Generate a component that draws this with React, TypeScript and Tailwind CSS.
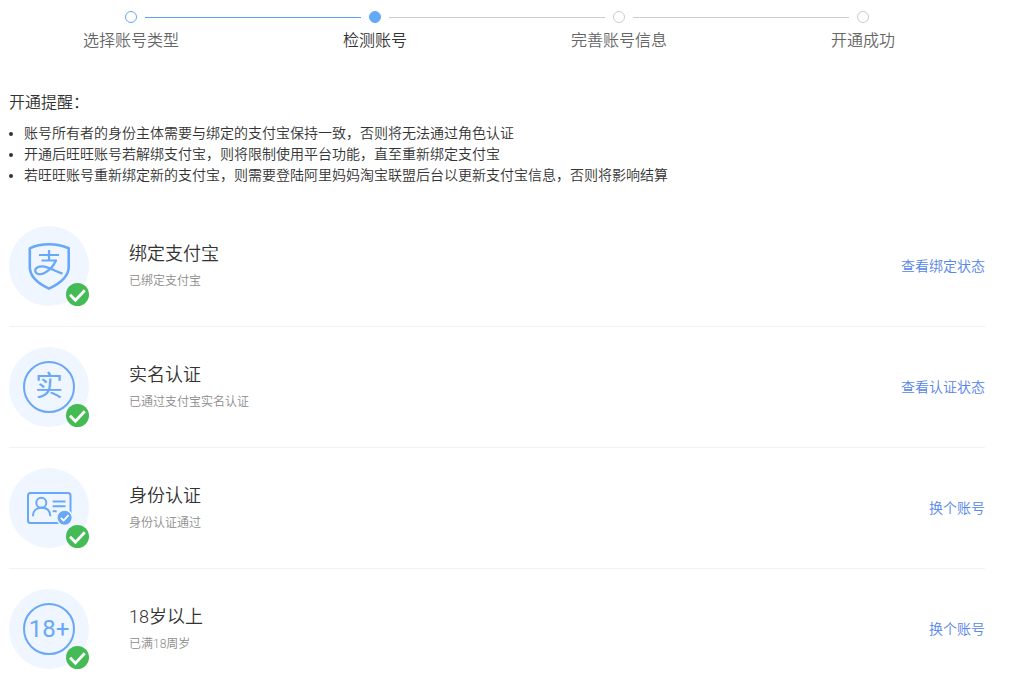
import type { ReactNode } from 'react';

type StepStatus = 'done' | 'current' | 'todo';

const STEPS: { title: string; status: StepStatus }[] = [
  { title: '选择账号类型', status: 'done' },
  { title: '检测账号', status: 'current' },
  { title: '完善账号信息', status: 'todo' },
  { title: '开通成功', status: 'todo' },
];

const TIPS = [
  '账号所有者的身份主体需要与绑定的支付宝保持一致，否则将无法通过角色认证',
  '开通后旺旺账号若解绑支付宝，则将限制使用平台功能，直至重新绑定支付宝',
  '若旺旺账号重新绑定新的支付宝，则需要登陆阿里妈妈淘宝联盟后台以更新支付宝信息，否则将影响结算',
];

const DOT_STYLES: Record<StepStatus, string> = {
  done: 'border-[#62a8fb] bg-white',
  current: 'border-[#62a8fb] bg-[#62a8fb]',
  todo: 'border-[#cccccc] bg-white',
};

function lineColor(index: number) {
  // 首尾两端不显示连接线
  if (index < 0 || index >= STEPS.length - 1) return 'bg-transparent';
  return STEPS[index].status === 'done' ? 'bg-[#5c9df5]' : 'bg-[#cccccc]';
}

function Steps() {
  return (
    <ol className="grid grid-cols-4">
      {STEPS.map((step, i) => (
        <li key={step.title} className="text-center">
          <div className="flex items-center">
            <span className={`h-px flex-1 ${lineColor(i - 1)}`} />
            <span className={`mx-2 size-3 rounded-full border ${DOT_STYLES[step.status]}`} />
            <span className={`h-px flex-1 ${lineColor(i)}`} />
          </div>
          <p
            className={`mt-1.5 text-base leading-6 ${
              step.status === 'current' ? 'text-[#333333]' : 'text-[#666666]'
            }`}
          >
            {step.title}
          </p>
        </li>
      ))}
    </ol>
  );
}

/** 支付宝盾牌 */
function ShieldIcon() {
  return (
    <svg
      className="size-20"
      viewBox="0 0 80 80"
      fill="none"
      stroke="currentColor"
      strokeLinejoin="round"
    >
      <path
        strokeWidth="2.6"
        d="M40 18.3C34 18.3 26 19.8 20.8 22.3V41C20.8 50.5 29 57.5 40 62.6C51 57.5 59.7 50.5 59.7 41V22.3C54 19.8 46 18.3 40 18.3Z"
      />
      <g strokeWidth="2.2">
        <path d="M40 24V34.3M30 29H50M32.5 34.5H48" />
        <path d="M47 34C45 39.5 40.5 44.3 35.5 47C31.5 49.2 26.4 48.4 26.2 44.8C26 41.2 31 39.6 35.5 40.6C41 41.8 46.5 45.2 53.5 47.6" />
      </g>
    </svg>
  );
}

/** 圆环文字图标 */
function RingIcon({ children }: { children: ReactNode }) {
  return (
    <div className="grid size-[52px] place-items-center rounded-full border-2 border-[#69a7f8] font-normal">
      {children}
    </div>
  );
}

/** 身份证 */
function IdCardIcon() {
  return (
    <svg className="size-20" viewBox="0 0 80 80" fill="none" stroke="currentColor" strokeWidth="2">
      <rect x="19" y="25" width="42.5" height="30" rx="2.5" />
      <circle cx="32.3" cy="34.7" r="5" />
      <path d="M23.8 48.2C24 42.8 27.5 39.8 32.5 39.8S41 42.8 41.4 48.2" />
      <path d="M43.7 33.5H56.5M43.7 38.2H56.5M43.7 43.2H47.7" />
      <circle cx="55.6" cy="49.7" r="7.8" fill="currentColor" stroke="#eff6ff" strokeWidth="1.5" />
      <path d="M51.8 49.8L54.6 52.5L59.6 47.2" stroke="#ffffff" strokeWidth="1.8" />
    </svg>
  );
}

function PassedBadge() {
  return (
    <svg className="absolute right-0 bottom-0 size-[23px]" viewBox="0 0 23 23" fill="none">
      <circle cx="11.5" cy="11.5" r="11.5" fill="#45bb56" />
      <path d="M4 11.8L9.4 17.2L18.8 7.3" stroke="#ffffff" strokeWidth="2.8" />
    </svg>
  );
}

const CHECKS = [
  {
    title: '绑定支付宝',
    desc: '已绑定支付宝',
    action: '查看绑定状态',
    icon: <ShieldIcon />,
  },
  {
    title: '实名认证',
    desc: '已通过支付宝实名认证',
    action: '查看认证状态',
    icon: (
      <RingIcon>
        <span className="text-[28px] leading-8">实</span>
      </RingIcon>
    ),
  },
  {
    title: '身份认证',
    desc: '身份认证通过',
    action: '换个账号',
    icon: <IdCardIcon />,
  },
  {
    title: '18岁以上',
    desc: '已满18周岁',
    action: '换个账号',
    icon: (
      <RingIcon>
        <span className="text-2xl leading-8">18+</span>
      </RingIcon>
    ),
  },
];

export default function App() {
  return (
    <main className="bg-white pt-[11px] pr-[25px] pl-[9px] font-['Roboto','Noto_Sans_CJK_SC',sans-serif] font-[350] text-[#333333]">
      <Steps />

      <section className="mt-[38px]">
        <h2 className="text-base leading-6">开通提醒：</h2>
        <ul className="mt-2 list-disc pl-[15px] text-sm leading-[21px]">
          {TIPS.map((tip) => (
            <li key={tip}>{tip}</li>
          ))}
        </ul>
      </section>

      <section className="mt-5 divide-y divide-[#f2f2f2]">
        {CHECKS.map((item) => (
          <div key={item.title} className="flex items-center py-5">
            <div className="relative mr-10 grid size-20 shrink-0 place-items-center rounded-full bg-[#eff6ff] text-[#69a7f8]">
              {item.icon}
              <PassedBadge />
            </div>
            <div className="flex-1">
              <h3 className="text-lg leading-7">{item.title}</h3>
              <p className="mt-[3px] mb-px text-xs leading-5 text-[#8c8c8c]">{item.desc}</p>
            </div>
            <a href="#" className="text-sm leading-5 text-[#5585e8]">
              {item.action}
            </a>
          </div>
        ))}
      </section>
    </main>
  );
}
